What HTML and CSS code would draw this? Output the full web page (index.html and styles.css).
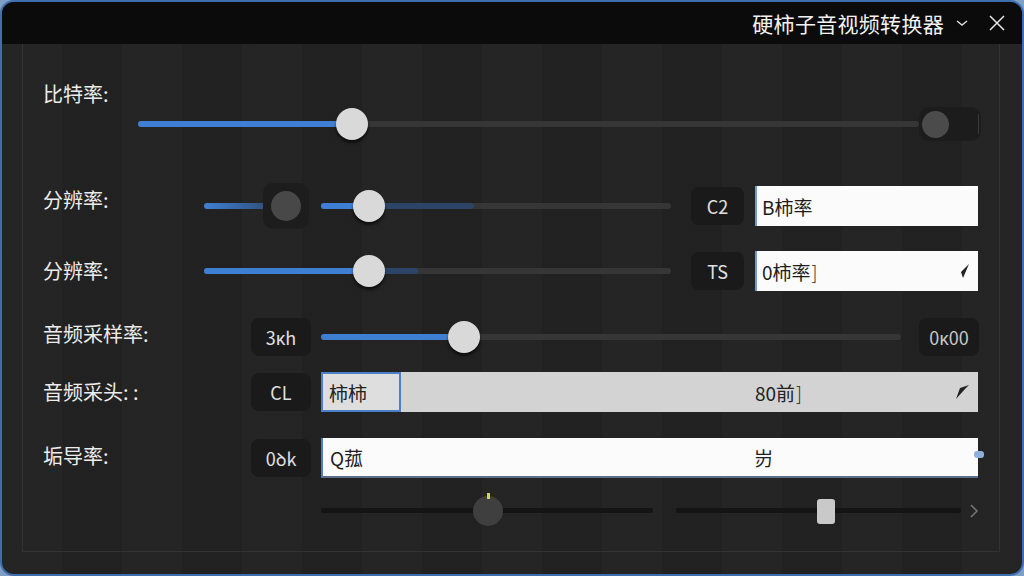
FILE: index.html
```html
<!DOCTYPE html>
<html lang="zh-CN">
<head>
  <meta charset="UTF-8" />
  <meta name="viewport" content="width=device-width, initial-scale=1.0"/>
  <title>硬柿子音视频转换器</title>
  <link rel="stylesheet" href="styles.css">
</head>
<body>
  <div class="window">
    <div class="titlebar">
      <span class="title">硬柿子音视频转换器</span>
      <span class="title-btn">
        <svg width="12" height="8" viewBox="0 0 12 8"><path d="M1 2 L6 6 L11 2" fill="none" stroke="#ddd" stroke-width="1.4"/></svg>
      </span>
      <span class="title-btn close">
        <svg width="18" height="18" viewBox="0 0 18 18"><path d="M2 2 L16 16 M16 2 L2 16" fill="none" stroke="#e6e6e6" stroke-width="1.5"/></svg>
      </span>
    </div>

    <div class="panel">
      <!-- 比特率 -->
      <div class="label top-label">比特率:</div>
      <div class="row row-bitrate">
        <div class="slider wide">
          <div class="track"></div>
          <div class="fill" style="width:214px"></div>
          <div class="thumb" style="left:214px"></div>
        </div>
        <div class="knob-box">
          <div class="knob"></div>
          <div class="knob-line"></div>
        </div>
      </div>

      <!-- 分辨率 -->
      <div class="row row-res">
        <div class="label col-short raised">分辨率:</div>
        <div class="mini">
          <div class="mini-track"></div>
          <div class="mini-box"><div class="mini-knob"></div></div>
        </div>
        <div class="slider res">
          <div class="track"></div>
          <div class="fill dim" style="width:153px"></div>
          <div class="fill" style="width:48px"></div>
          <div class="thumb" style="left:48px"></div>
        </div>
        <div class="badge tag">C2</div>
        <div class="field">B柿率</div>
      </div>

      <div class="row row-res2">
        <div class="label col-short">分辨率:</div>
        <div class="slider res long">
          <div class="track"></div>
          <div class="fill dim" style="width:214px"></div>
          <div class="fill" style="width:165px"></div>
          <div class="thumb" style="left:165px"></div>
        </div>
        <div class="badge tag">TS</div>
        <div class="field">0柿率<span class="caret">]</span>
          <svg class="field-icon" width="16" height="16" viewBox="0 0 16 16"><path d="M1 6 L7 9 L15 1 L9 15 L7 9 Z" fill="#222"/></svg>
        </div>
      </div>

      <!-- 音频采样率 -->
      <div class="row row-rate">
        <div class="label col-long">音频采样率:</div>
        <div class="badge">3ĸh</div>
        <div class="slider rate">
          <div class="track"></div>
          <div class="fill" style="width:143px"></div>
          <div class="thumb" style="left:143px"></div>
        </div>
        <div class="badge right">0ĸ00</div>
      </div>

      <!-- 音频采头 -->
      <div class="row row-codec">
        <div class="label col-long">音频采头: :</div>
        <div class="badge">CL</div>
        <div class="combo">
          <div class="combo-tab">柿柿</div>
          <div class="combo-value">80前<span class="caret">]</span></div>
          <svg class="combo-icon" width="16" height="16" viewBox="0 0 16 16"><path d="M2 15 L6 4 L15 1 L11 5 Z" fill="#222"/></svg>
        </div>
      </div>

      <!-- 垢导率 -->
      <div class="row row-guide">
        <div class="label col-long">垢导率:</div>
        <div class="badge">0ꝺk</div>
        <div class="entry">
          <span class="entry-left">Q菰</span>
          <span class="entry-mid">岃</span>
          <span class="entry-grip"></span>
        </div>
      </div>

      <!-- 底部滑块 -->
      <div class="row row-bottom">
        <div class="dark-slider first">
          <div class="dark-track"></div>
          <div class="dial" style="left:167px"><span class="dial-tick"></span></div>
        </div>
        <div class="dark-slider second">
          <div class="dark-track"></div>
          <div class="block-thumb" style="left:150px"></div>
        </div>
        <svg class="chevron" width="10" height="16" viewBox="0 0 10 16"><path d="M2 2 L8 8 L2 14" fill="none" stroke="#777" stroke-width="1.5"/></svg>
      </div>
    </div>
  </div>
</body>
</html>
```

FILE: styles.css
```css
:root {
  --win-bg: #222222;
  --title-bg: #0b0b0b;
  --blue: #3f7fd3;
  --blue-dim: #2c4566;
  --track: #363636;
  --text: #ececec;
  --badge-bg: #1a1a1a;
}
* {
  box-sizing: border-box;
}
html, body {
  margin: 0;
  height: 100%;
  background: #7f9fc4;
}
body {
  font-family: "Noto Sans CJK SC", "Noto Sans", sans-serif;
  color: var(--text);
}
.window {
  width: 1024px;
  height: 576px;
  border: 2px solid #3d6fae;
  border-radius: 14px;
  overflow: hidden;
  background:
    repeating-linear-gradient(90deg, rgba(255,255,255,0.012) 0 60px, rgba(0,0,0,0.02) 60px 120px),
    var(--win-bg);
  display: flex;
  flex-direction: column;
}
.titlebar {
  height: 42px;
  background: var(--title-bg);
  display: flex;
  align-items: center;
  justify-content: flex-end;
  padding-right: 16px;
  flex-shrink: 0;
}
.title {
  font-size: 21px;
  color: #f2f2f2;
  margin-right: 12px;
  letter-spacing: 0.3px;
}
.title-btn {
  display: flex;
  align-items: center;
  margin-right: 20px;
}
.title-btn.close {
  margin-right: 0;
}
.panel {
  flex: 1;
  margin: 0 22px 22px 20px;
  border: 1px solid #333;
  border-top: none;
  padding: 38px 0 0 20px;
}
.label {
  font-size: 20px;
  color: var(--text);
  line-height: 24px;
  flex-shrink: 0;
}
.label.raised {
  margin-bottom: 12px;
}
.top-label {
  height: 24px;
}
.row {
  display: flex;
  align-items: center;
}
.row-bitrate {
  height: 32px;
  margin-top: 2px;
  padding-left: 95px;
}
.col-short {
  width: 161px;
}
.col-long {
  width: 208px;
}

/* sliders */
.slider {
  position: relative;
  height: 32px;
  flex-shrink: 0;
}
.slider .track,
.slider .fill {
  position: absolute;
  left: 0;
  top: 13px;
  height: 6px;
  border-radius: 3px;
}
.slider .track {
  right: 0;
  background: var(--track);
}
.slider .fill {
  background: var(--blue);
}
.slider .fill.dim {
  background: var(--blue-dim);
}
.thumb {
  position: absolute;
  top: 0;
  width: 32px;
  height: 32px;
  margin-left: -16px;
  border-radius: 50%;
  background: #d9d9d9;
  box-shadow: 0 3px 3px rgba(0,0,0,0.6);
}
.slider.wide {
  width: 781px;
}
.knob-box {
  width: 62px;
  height: 34px;
  border-radius: 10px;
  background: #1c1c1c;
  display: flex;
  align-items: center;
  padding-left: 3px;
  gap: 29px;
}
.knob {
  width: 27px;
  height: 27px;
  border-radius: 50%;
  background: #4b4b4b;
}
.knob-line {
  width: 1px;
  height: 20px;
  background: #3a3a3a;
}

.row-res {
  height: 40px;
  margin-top: 46px;
}
.row-res2 {
  height: 40px;
  margin-top: 25px;
}
.mini {
  position: relative;
  width: 105px;
  height: 46px;
  margin-right: 12px;
}
.mini-track {
  position: absolute;
  left: 0;
  width: 80px;
  top: 20px;
  height: 6px;
  border-radius: 3px;
  background: linear-gradient(90deg, var(--blue), var(--blue-dim));
}
.mini-box {
  position: absolute;
  left: 59px;
  top: 0;
  width: 46px;
  height: 46px;
  border-radius: 10px;
  background: #1d1d1d;
  display: flex;
  align-items: center;
  justify-content: center;
}
.mini-knob {
  width: 30px;
  height: 30px;
  border-radius: 50%;
  background: #484848;
}
.slider.res {
  width: 350px;
}
.slider.res.long {
  width: 467px;
}
.badge {
  height: 38px;
  width: 60px;
  border-radius: 8px;
  background: var(--badge-bg);
  color: #e0e0e0;
  font-size: 18px;
  display: flex;
  align-items: center;
  justify-content: center;
  flex-shrink: 0;
}
.badge.tag {
  width: 53px;
  margin-left: 20px;
  margin-right: 11px;
}
.field {
  position: relative;
  width: 223px;
  height: 40px;
  background: #fbfbfb;
  border-left: 2px solid #6f9ad6;
  color: #1e1e1e;
  font-size: 19px;
  display: flex;
  align-items: center;
  padding-left: 5px;
}
.caret {
  font-weight: 300;
  margin-left: 1px;
}
.field-icon {
  position: absolute;
  right: 8px;
  top: 12px;
}

.row-rate {
  height: 40px;
  margin-top: 26px;
}
.row-rate .label {
  margin-bottom: 6px;
}
.slider.rate {
  width: 580px;
  margin-left: 10px;
  margin-right: 18px;
}
.badge.right {
  width: 60px;
  color: #c8c8c8;
}

.row-codec {
  height: 40px;
  margin-top: 15px;
}
.combo {
  position: relative;
  width: 657px;
  height: 40px;
  margin-left: 10px;
  background: #d3d3d3;
  color: #222;
  font-size: 19px;
  display: flex;
  align-items: center;
}
.combo-tab {
  width: 80px;
  height: 40px;
  border: 2px solid #4a7fc9;
  background: #dedede;
  padding-left: 6px;
  display: flex;
  align-items: center;
}
.combo-value {
  margin-left: 354px;
}
.combo-icon {
  position: absolute;
  right: 8px;
  top: 12px;
}

.row-guide {
  height: 40px;
  margin-top: 26px;
}
.row-guide .label {
  margin-bottom: 4px;
}
.entry {
  position: relative;
  width: 657px;
  height: 40px;
  margin-left: 10px;
  background: #fbfbfb;
  border-left: 2px solid #4a7fc9;
  border-bottom: 2px solid #5a6f8a;
  color: #1e1e1e;
  font-size: 19px;
  display: flex;
  align-items: center;
  padding-left: 7px;
}
.entry-mid {
  margin-left: 391px;
}
.entry-grip {
  position: absolute;
  right: -6px;
  top: 13px;
  width: 10px;
  height: 7px;
  border-radius: 3px;
  background: #8fb0dc;
}

.row-bottom {
  height: 34px;
  margin-top: 16px;
  padding-left: 278px;
}
.dark-slider {
  position: relative;
  height: 34px;
}
.dark-slider.first {
  width: 332px;
  margin-right: 23px;
}
.dark-slider.second {
  width: 285px;
  margin-right: 8px;
}
.dark-track {
  position: absolute;
  left: 0;
  right: 0;
  top: 14px;
  height: 5px;
  border-radius: 2px;
  background: #141414;
}
.dial {
  position: absolute;
  top: 2px;
  width: 30px;
  height: 30px;
  margin-left: -15px;
  border-radius: 50%;
  background: #3f3f3f;
}
.dial-tick {
  position: absolute;
  left: 14px;
  top: -3px;
  width: 3px;
  height: 6px;
  background: #c8d84a;
}
.block-thumb {
  position: absolute;
  top: 5px;
  width: 18px;
  height: 25px;
  margin-left: -9px;
  border-radius: 3px;
  background: #c9c9c9;
}
```
